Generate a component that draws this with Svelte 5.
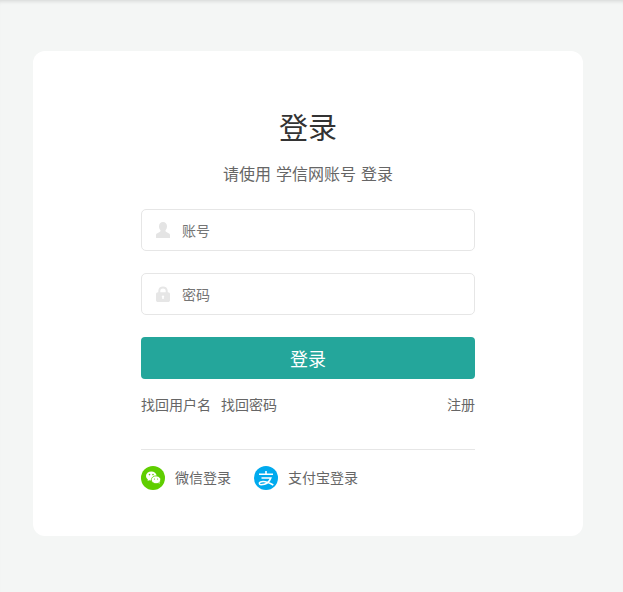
<script>
  let account = $state('')
  let password = $state('')
</script>

<div class="page">
  <main class="card">
    <h1>登录</h1>
    <p class="sub">请使用 学信网账号 登录</p>
    <form onsubmit={(e) => e.preventDefault()}>
      <label class="field">
        <svg class="ico" viewBox="0 0 14 16" width="14" height="16" aria-hidden="true">
          <path d="M7 0c2.400 0 4 1.800 4 4.200 0 1.800-.7 3.200-1.500 4v.9c0 .4.300.7.900 1l2.200 1.100c.9.400 1.400 1 1.400 1.900V16H0v-2.900c0-.9.500-1.500 1.400-1.900l2.200-1.100c.6-.3.900-.6.900-1v-.9C3.700 7.400 3 6 3 4.200 3 1.800 4.600 0 7 0z" fill="#e4e4e4"/>
        </svg>
        <input bind:value={account} placeholder="账号" />
      </label>
      <label class="field">
        <svg class="ico" viewBox="0 0 14 16" width="14" height="16" aria-hidden="true">
          <path fill-rule="evenodd" d="M2.300 6.200V4.700C2.300 2.100 4.400.5 7 .5s4.700 1.600 4.700 4.200v1.500h.4c1 0 1.900.8 1.900 1.800v6.200c0 1-.9 1.800-1.900 1.800H1.900C.9 16 0 15.200 0 14.200V8c0-1 .9-1.800 1.900-1.800h.4zm2 0h5.400V4.700c0-1.400-1.200-2.200-2.700-2.200s-2.700.8-2.700 2.200v1.500zM7 9.400a1.200 1.200 0 0 0-.7 2.200v1.500h1.400v-1.500A1.200 1.200 0 0 0 7 9.400z" fill="#e6e6e6"/>
        </svg>
        <input type="password" bind:value={password} placeholder="密码" />
      </label>
      <button type="submit">登录</button>
    </form>
    <div class="links">
      <a href="#user">找回用户名</a>
      <a href="#pwd">找回密码</a>
      <a class="reg" href="#reg">注册</a>
    </div>
    <div class="social">
      <a href="#wx">
        <svg viewBox="0 0 24 24" width="24" height="24" aria-hidden="true">
          <circle cx="12" cy="12" r="12" fill="#5fce00"/>
          <ellipse cx="10.300" cy="10" rx="5.300" ry="4.500" fill="#fff"/>
          <path d="M7.200 13l-.6 2.100 2.400-1.300z" fill="#fff"/>
          <ellipse cx="15" cy="13.800" rx="4.700" ry="3.900" fill="#fff" stroke="#5fce00" stroke-width=".8"/>
          <path d="M17.200 16.800l1.300 1.300-.2-2z" fill="#fff"/>
          <circle cx="8.500" cy="8.600" r=".8" fill="#5fce00"/>
          <circle cx="12" cy="8.600" r=".8" fill="#5fce00"/>
          <circle cx="13.500" cy="13" r=".6" fill="#5fce00"/>
          <circle cx="16.500" cy="13" r=".6" fill="#5fce00"/>
        </svg>
        <span>微信登录</span>
      </a>
      <a href="#ali">
        <svg viewBox="0 0 24 24" width="24" height="24" aria-hidden="true">
          <circle cx="12" cy="12" r="12" fill="#00aaee"/>
          <path d="M5 8.300h14M12 5v3.300M7.500 12h9.300c-1.300 3.800-5 6.600-9.800 6.800-1.800 0-2.300-2.200-.5-2.900 3.300-1 8.500.6 12.800 3.100" fill="none" stroke="#fff" stroke-width="1.600"/>
        </svg>
        <span>支付宝登录</span>
      </a>
    </div>
  </main>
</div>

<style>
  :global(body) {
    margin: 0;
    background: #f4f6f5;
  }

  .page {
    height: 592px;
    overflow: hidden;
    box-sizing: border-box;
    padding-top: 51px;
    box-shadow: inset 0 4px 4px -3px rgba(0, 0, 0, 0.14);
    font-family: "Noto Sans CJK SC", "Noto Sans", sans-serif;
    color: #666;
  }

  .card {
    width: 550px;
    height: 485px;
    box-sizing: border-box;
    margin-left: 33px;
    padding: 54px 108px 0;
    background: #fff;
    border-radius: 12px;
  }

  h1 {
    margin: 0;
    height: 42px;
    line-height: 42px;
    text-align: center;
    font-size: 29px;
    font-weight: 400;
    color: #333;
  }

  .sub {
    margin: 14px 0 0;
    height: 24px;
    line-height: 24px;
    text-align: center;
    font-size: 16px;
    word-spacing: 1.500px;
    color: #666;
  }

  form {
    margin-top: 24px;
    display: flex;
    flex-direction: column;
  }

  .field {
    height: 42px;
    box-sizing: border-box;
    margin-bottom: 22px;
    padding-left: 14px;
    display: flex;
    align-items: center;
    gap: 12px;
    border: 1px solid #e6e6e6;
    border-radius: 5px;
    background: #fff;
  }

  .ico {
    flex: none;
  }

  input {
    flex: 1;
    min-width: 0;
    border: 0;
    outline: 0;
    padding: 0;
    background: transparent;
    font: inherit;
    font-size: 14px;
    color: #333;
  }

  input::placeholder {
    color: #757575;
    opacity: 1;
  }

  button {
    height: 42px;
    border: 0;
    border-radius: 4px;
    background: #24a69b;
    color: #fff;
    font: inherit;
    font-size: 18px;
    padding: 0;
  }

  .links {
    margin-top: 15px;
    height: 20px;
    display: flex;
    gap: 10px;
    font-size: 14px;
    line-height: 20px;
  }

  a {
    color: #666;
    text-decoration: none;
  }

  .reg {
    margin-left: auto;
  }

  .social {
    margin-top: 35px;
    padding-top: 16px;
    border-top: 1px solid #e6e6e6;
    display: flex;
    gap: 23px;
    font-size: 14px;
  }

  .social a {
    display: flex;
    align-items: center;
    gap: 10px;
    height: 24px;
  }

  .social span {
    margin-bottom: 2px;
  }
</style>
